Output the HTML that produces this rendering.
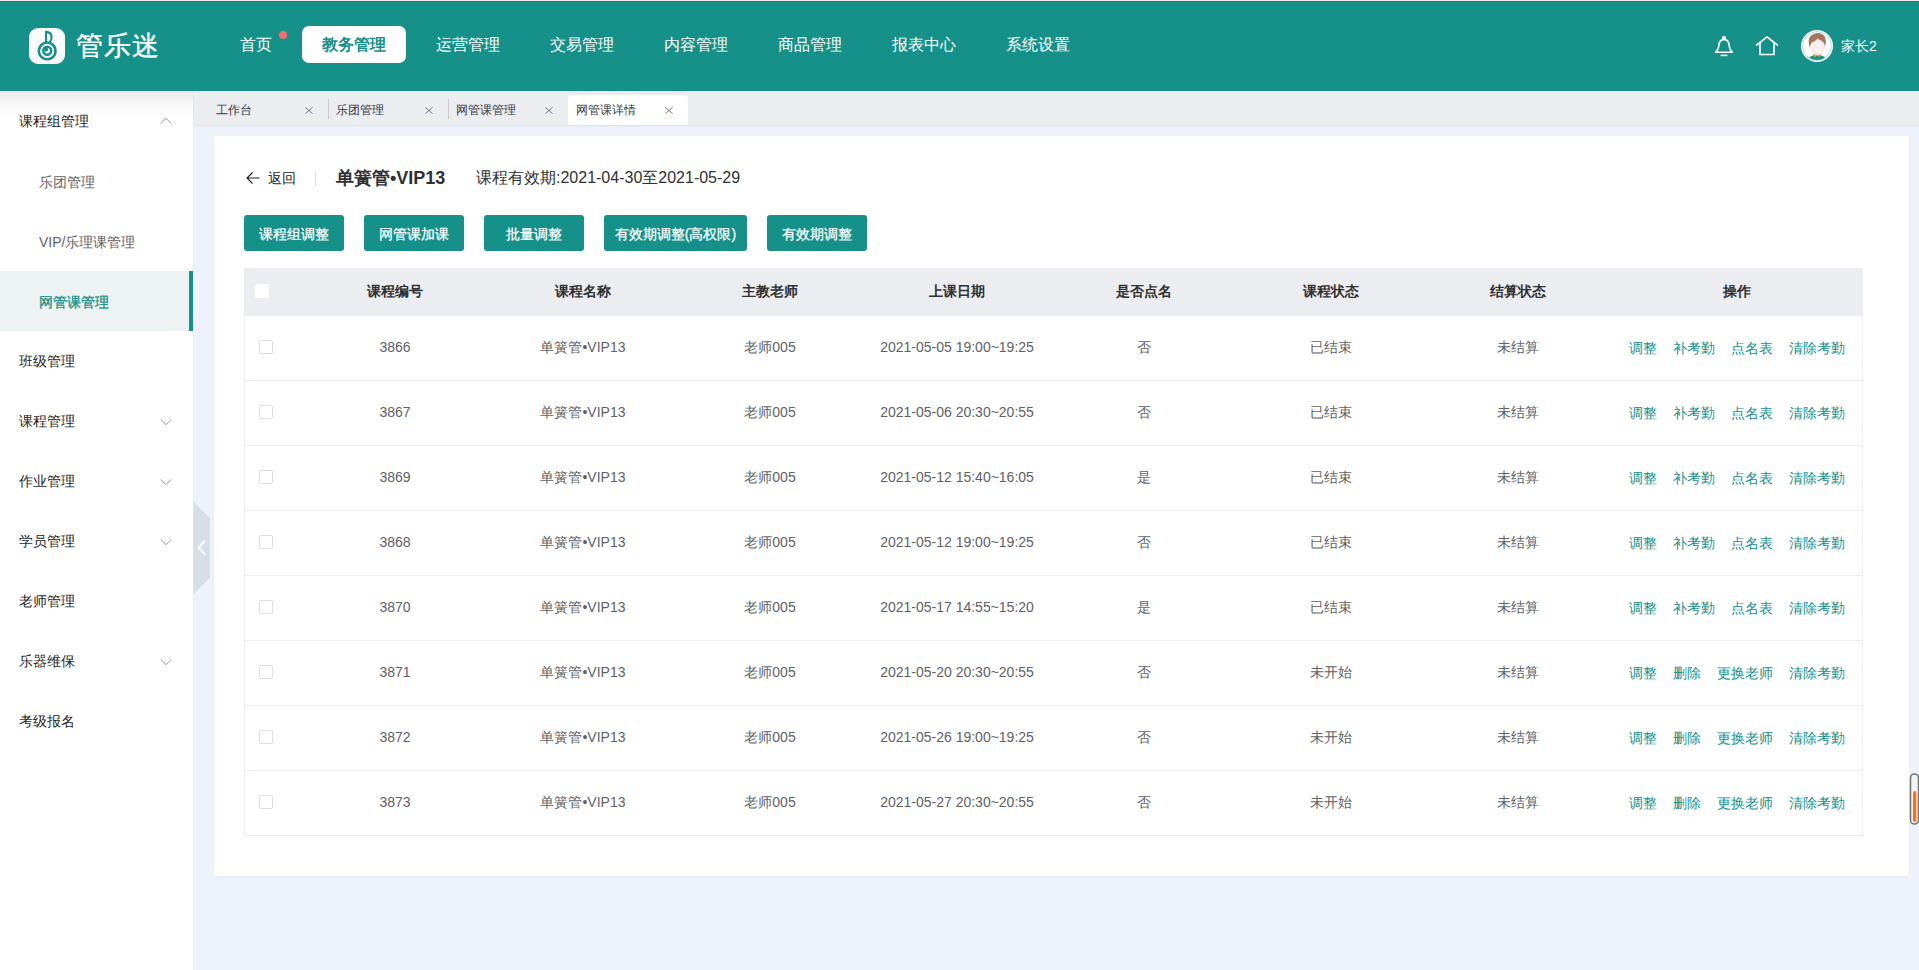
<!DOCTYPE html>
<html><head><meta charset="utf-8">
<style>
*{box-sizing:border-box;margin:0;padding:0}
html,body{width:1919px;height:970px;overflow:hidden;background:#eef3fb;font-family:"Liberation Sans",sans-serif;}
.abs{position:absolute}
#topline{left:0;top:0;width:1919px;height:1px;background:#efe6ec}
#header{left:0;top:1px;width:1919px;height:90px;background:#16918a;border-top:1px solid #078a80}
.logo-box{left:29px;top:28px;width:36px;height:36px;background:#fff;border-radius:9px}
.logo-box svg{position:absolute;left:0;top:0}
.logo-txt{left:76px;top:28px;font-size:27px;color:#fff;letter-spacing:1px;line-height:36px;font-weight:400;-webkit-text-stroke:0.35px #fff}
.nav{top:26px;height:37px;line-height:37px;font-size:16px;color:#fff;text-align:center;border-radius:7px;white-space:nowrap}
.nav.on{background:#fff;color:#16918a;font-weight:bold}
.dot{left:279px;top:31px;width:8px;height:8px;border-radius:50%;background:#f56c6c}
.uname{left:1841px;top:36px;font-size:14px;line-height:20px;color:#fff;white-space:nowrap}
#side{left:0;top:91px;width:194px;height:879px;background:#fff;border-right:1px solid #ebebeb}
#sideshadow{left:0;top:91px;width:193px;height:26px;background:linear-gradient(rgba(0,0,0,.085),rgba(0,0,0,.025) 55%,rgba(0,0,0,0))}
.mi{left:0;width:193px;height:60px;line-height:60px;font-size:14px;color:#1f1f1f;padding-left:19px;white-space:nowrap}
.mi.sub{padding-left:39px;color:#606266;line-height:62px}
.mi.act{background:#edf3f3;color:#16918a;-webkit-text-stroke:0.3px #16918a;border-right:4px solid #16918a;width:193px}
.chev{left:160px}
#tabs{left:194px;top:91px;width:1725px;height:34px;background:#ebedf0;box-shadow:0 1px 2px rgba(0,0,0,.08)}
.tab{top:95px;width:120px;height:30px;font-size:12px;color:#333a45;line-height:30px;padding-left:8px;white-space:nowrap}
.tab.on{background:#fff;border-radius:4px 4px 0 0}
.tsep{top:99px;width:1px;height:20px;background:#c8c9cc}
#card{left:214px;top:136px;width:1695px;height:740px;background:#fff;box-shadow:0 1px 3px rgba(0,0,0,.04)}
.back{left:268px;top:168px;font-size:14px;line-height:20px;color:#1f2022}
.vsep{left:315px;top:171px;width:1px;height:15px;background:#dcdfe6}
.title{left:336px;top:166px;font-size:18px;line-height:24px;font-weight:bold;color:#303133;white-space:nowrap}
.period{left:476px;top:166px;font-size:16px;line-height:24px;color:#303133;white-space:nowrap}
.btn{top:215px;height:36px;line-height:38px;-webkit-text-stroke:0.25px #fff;background:#16918a;color:#fff;font-size:14px;text-align:center;border-radius:3px;white-space:nowrap}
#thead{left:244px;top:268px;width:1619px;height:48px;background:#ebedf0}
.th{top:268px;height:48px;line-height:48px;font-size:14px;font-weight:bold;color:#303133;text-align:center;white-space:nowrap}
.row{left:244px;width:1619px;height:65px;border-left:1px solid #ebeef5;border-right:1px solid #ebeef5;border-bottom:1px solid #ebeef5;background:#fff}
.td{height:64px;line-height:64px;font-size:14px;color:#606266;text-align:center;white-space:nowrap}
.cb{width:14px;height:14px;border:1px solid #dcdfe6;border-radius:2px;background:#fff}
.ops{font-size:14px;color:#16918a;white-space:nowrap}
.ops span{margin-right:16px}
.ops span:last-child{margin-right:0}

</style></head><body>
<div class="abs" id="topline"></div>
<div class="abs" id="header"></div>
<div class="abs logo-box"><svg width="36" height="36" viewBox="0 0 36 36"><g fill="none" stroke="#16918a">
<circle cx="18.2" cy="22.9" r="8.35" stroke-width="2.6"/><circle cx="18.2" cy="22.8" r="3.95" stroke-width="2.5"/>
<path d="M17 3.9 Q22.5 4.3 22.6 9.2 Q22.6 12.2 20.5 14.4" stroke-width="2.2"/></g>
<rect x="16" y="2.8" width="2.1" height="12.6" fill="#16918a"/>
<circle cx="17.1" cy="21.6" r="2.1" fill="#16918a"/>
</svg></div>
<div class="abs logo-txt">管乐迷</div>
<div class="abs nav" style="left:220px;width:72px">首页</div>
<div class="abs nav on" style="left:302px;width:104px">教务管理</div>
<div class="abs nav" style="left:416px;width:104px">运营管理</div>
<div class="abs nav" style="left:530px;width:104px">交易管理</div>
<div class="abs nav" style="left:644px;width:104px">内容管理</div>
<div class="abs nav" style="left:758px;width:104px">商品管理</div>
<div class="abs nav" style="left:872px;width:104px">报表中心</div>
<div class="abs nav" style="left:986px;width:104px">系统设置</div>
<div class="abs dot"></div>
<svg class="abs" style="left:1712px;top:34px" width="24" height="24" viewBox="0 0 24 24"><g fill="none" stroke="#fff" stroke-width="1.6" stroke-linejoin="round">
<path d="M3.6 18.3 Q6.3 16.2 6.8 11.8 Q7.2 5.6 12 5.4 Q16.8 5.6 17.2 11.8 Q17.7 16.2 20.4 18.3 Z"/>
<circle cx="12" cy="3.9" r="1.3"/><path d="M8.6 21.4 H15.4"/></g></svg>
<svg class="abs" style="left:1755px;top:34px" width="24" height="24" viewBox="0 0 24 24"><g fill="none" stroke="#fff" stroke-width="1.7" stroke-linejoin="round" stroke-linecap="round">
<path d="M1.7 11 L12 2.8 L22.3 11"/><path d="M5 9 V20.5 H19 V9"/></g></svg>
<svg class="abs" style="left:1801px;top:30px" width="32" height="32" viewBox="0 0 32 32">
<defs><clipPath id="avc"><circle cx="16" cy="16" r="14"/></clipPath></defs>
<circle cx="16" cy="16" r="16" fill="#fff"/><circle cx="16" cy="16" r="14.4" fill="none" stroke="#8fcfc9" stroke-width=".7"/>
<g clip-path="url(#avc)"><path d="M5 33 Q6.5 25.5 16 24.8 Q25.5 25.5 27 33Z" fill="#16918a"/>
<path d="M11.8 24.2 L14 27.6 L16 25.2 L18.2 27.6 L20.2 24.2Z" fill="#d9a521"/>
<ellipse cx="16.4" cy="16.3" rx="7.1" ry="8.8" fill="#fcefef" stroke="#e9cccc" stroke-width=".5"/>
<path d="M8.6 17.5 Q6.4 9.5 9.8 5.8 Q12.8 2.9 17 3 Q22.2 3.3 24.2 7.6 Q25.6 11.2 24.1 16.5 Q23.4 12.4 20.8 10.8 Q18.2 9.8 16.6 8.4 Q14.2 11.6 10.6 12.6 Q9.4 14.6 8.6 17.5Z" fill="#a9735f"/></g>
</svg>
<div class="abs uname">家长2</div>
<div class="abs" id="side"></div>
<div class="abs" id="sideshadow"></div>
<div class="abs mi" style="top:91px">课程组管理</div>
<svg class="abs chev" style="top:117px" width="12" height="8" viewBox="0 0 12 8"><path d="M0.7 6.6 L6 1.3 L11.3 6.6" fill="none" stroke="#909399" stroke-width="1"/></svg>
<div class="abs mi sub" style="top:151px">乐团管理</div>
<div class="abs mi sub" style="top:211px">VIP/乐理课管理</div>
<div class="abs mi sub act" style="top:271px">网管课管理</div>
<div class="abs mi" style="top:331px">班级管理</div>
<div class="abs mi" style="top:391px">课程管理</div>
<svg class="abs chev" style="top:418px" width="12" height="8" viewBox="0 0 12 8"><path d="M0.7 1.4 L6 6.7 L11.3 1.4" fill="none" stroke="#909399" stroke-width="1"/></svg>
<div class="abs mi" style="top:451px">作业管理</div>
<svg class="abs chev" style="top:478px" width="12" height="8" viewBox="0 0 12 8"><path d="M0.7 1.4 L6 6.7 L11.3 1.4" fill="none" stroke="#909399" stroke-width="1"/></svg>
<div class="abs mi" style="top:511px">学员管理</div>
<svg class="abs chev" style="top:538px" width="12" height="8" viewBox="0 0 12 8"><path d="M0.7 1.4 L6 6.7 L11.3 1.4" fill="none" stroke="#909399" stroke-width="1"/></svg>
<div class="abs mi" style="top:571px">老师管理</div>
<div class="abs mi" style="top:631px">乐器维保</div>
<svg class="abs chev" style="top:658px" width="12" height="8" viewBox="0 0 12 8"><path d="M0.7 1.4 L6 6.7 L11.3 1.4" fill="none" stroke="#909399" stroke-width="1"/></svg>
<div class="abs mi" style="top:691px">考级报名</div>
<svg class="abs" style="left:193px;top:502px" width="18" height="92" viewBox="0 0 18 92"><path d="M0.5 0 L17 16 V76 L0.5 92 Z" fill="#d6dee6"/>
<path d="M11.8 38.5 L5.6 45.5 L11.8 52.5" fill="none" stroke="#fff" stroke-width="2"/></svg>
<div class="abs" id="tabs"></div>
<div class="abs tab" style="left:208px">工作台</div>
<svg class="abs" style="left:305px;top:107px" width="8" height="7" viewBox="0 0 8 7"><path d="M0.3 0.2 L7.7 6.8 M7.7 0.2 L0.3 6.8" stroke="#6b7888" stroke-width="1"/></svg>
<div class="abs tsep" style="left:328px"></div>
<div class="abs tab" style="left:328px">乐团管理</div>
<svg class="abs" style="left:425px;top:107px" width="8" height="7" viewBox="0 0 8 7"><path d="M0.3 0.2 L7.7 6.8 M7.7 0.2 L0.3 6.8" stroke="#6b7888" stroke-width="1"/></svg>
<div class="abs tsep" style="left:448px"></div>
<div class="abs tab" style="left:448px">网管课管理</div>
<svg class="abs" style="left:545px;top:107px" width="8" height="7" viewBox="0 0 8 7"><path d="M0.3 0.2 L7.7 6.8 M7.7 0.2 L0.3 6.8" stroke="#6b7888" stroke-width="1"/></svg>
<div class="abs tab on" style="left:568px">网管课详情</div>
<svg class="abs" style="left:665px;top:107px" width="8" height="7" viewBox="0 0 8 7"><path d="M0.3 0.2 L7.7 6.8 M7.7 0.2 L0.3 6.8" stroke="#6b7888" stroke-width="1"/></svg>
<div class="abs" id="card"></div>
<svg class="abs" style="left:245px;top:171px" width="16" height="14" viewBox="0 0 16 14"><path d="M14.5 7 H2 M7.5 1.5 L2 7 L7.5 12.5" fill="none" stroke="#222" stroke-width="1.15"/></svg>
<div class="abs back">返回</div>
<div class="abs vsep"></div>
<div class="abs title">单簧管•VIP13</div>
<div class="abs period">课程有效期:2021-04-30至2021-05-29</div>
<div class="abs btn" style="left:244px;width:100px">课程组调整</div>
<div class="abs btn" style="left:364px;width:100px">网管课加课</div>
<div class="abs btn" style="left:484px;width:100px">批量调整</div>
<div class="abs btn" style="left:604px;width:143px">有效期调整(高权限)</div>
<div class="abs btn" style="left:767px;width:100px">有效期调整</div>
<div class="abs" id="thead"></div>
<div class="abs cb" style="left:255px;top:284px;border-color:#fff"></div>
<div class="abs th" style="left:295px;width:200px;top:267px">课程编号</div>
<div class="abs th" style="left:483px;width:200px;top:267px">课程名称</div>
<div class="abs th" style="left:670px;width:200px;top:267px">主教老师</div>
<div class="abs th" style="left:857px;width:200px;top:267px">上课日期</div>
<div class="abs th" style="left:1044px;width:200px;top:267px">是否点名</div>
<div class="abs th" style="left:1231px;width:200px;top:267px">课程状态</div>
<div class="abs th" style="left:1418px;width:200px;top:267px">结算状态</div>
<div class="abs th" style="left:1637px;width:200px;top:267px">操作</div>
<div class="abs row" style="top:316px"></div>
<div class="abs cb" style="left:259px;top:340px"></div>
<div class="abs td" style="left:295px;width:200px;top:315px">3866</div>
<div class="abs td" style="left:483px;width:200px;top:315px">单簧管•VIP13</div>
<div class="abs td" style="left:670px;width:200px;top:315px">老师005</div>
<div class="abs td" style="left:857px;width:200px;top:315px">2021-05-05 19:00~19:25</div>
<div class="abs td" style="left:1044px;width:200px;top:315px">否</div>
<div class="abs td" style="left:1231px;width:200px;top:315px">已结束</div>
<div class="abs td" style="left:1418px;width:200px;top:315px">未结算</div>
<div class="abs ops" style="left:1629px;top:316px;line-height:64px"><span>调整</span><span>补考勤</span><span>点名表</span><span>清除考勤</span></div>
<div class="abs row" style="top:381px"></div>
<div class="abs cb" style="left:259px;top:405px"></div>
<div class="abs td" style="left:295px;width:200px;top:380px">3867</div>
<div class="abs td" style="left:483px;width:200px;top:380px">单簧管•VIP13</div>
<div class="abs td" style="left:670px;width:200px;top:380px">老师005</div>
<div class="abs td" style="left:857px;width:200px;top:380px">2021-05-06 20:30~20:55</div>
<div class="abs td" style="left:1044px;width:200px;top:380px">否</div>
<div class="abs td" style="left:1231px;width:200px;top:380px">已结束</div>
<div class="abs td" style="left:1418px;width:200px;top:380px">未结算</div>
<div class="abs ops" style="left:1629px;top:381px;line-height:64px"><span>调整</span><span>补考勤</span><span>点名表</span><span>清除考勤</span></div>
<div class="abs row" style="top:446px"></div>
<div class="abs cb" style="left:259px;top:470px"></div>
<div class="abs td" style="left:295px;width:200px;top:445px">3869</div>
<div class="abs td" style="left:483px;width:200px;top:445px">单簧管•VIP13</div>
<div class="abs td" style="left:670px;width:200px;top:445px">老师005</div>
<div class="abs td" style="left:857px;width:200px;top:445px">2021-05-12 15:40~16:05</div>
<div class="abs td" style="left:1044px;width:200px;top:445px">是</div>
<div class="abs td" style="left:1231px;width:200px;top:445px">已结束</div>
<div class="abs td" style="left:1418px;width:200px;top:445px">未结算</div>
<div class="abs ops" style="left:1629px;top:446px;line-height:64px"><span>调整</span><span>补考勤</span><span>点名表</span><span>清除考勤</span></div>
<div class="abs row" style="top:511px"></div>
<div class="abs cb" style="left:259px;top:535px"></div>
<div class="abs td" style="left:295px;width:200px;top:510px">3868</div>
<div class="abs td" style="left:483px;width:200px;top:510px">单簧管•VIP13</div>
<div class="abs td" style="left:670px;width:200px;top:510px">老师005</div>
<div class="abs td" style="left:857px;width:200px;top:510px">2021-05-12 19:00~19:25</div>
<div class="abs td" style="left:1044px;width:200px;top:510px">否</div>
<div class="abs td" style="left:1231px;width:200px;top:510px">已结束</div>
<div class="abs td" style="left:1418px;width:200px;top:510px">未结算</div>
<div class="abs ops" style="left:1629px;top:511px;line-height:64px"><span>调整</span><span>补考勤</span><span>点名表</span><span>清除考勤</span></div>
<div class="abs row" style="top:576px"></div>
<div class="abs cb" style="left:259px;top:600px"></div>
<div class="abs td" style="left:295px;width:200px;top:575px">3870</div>
<div class="abs td" style="left:483px;width:200px;top:575px">单簧管•VIP13</div>
<div class="abs td" style="left:670px;width:200px;top:575px">老师005</div>
<div class="abs td" style="left:857px;width:200px;top:575px">2021-05-17 14:55~15:20</div>
<div class="abs td" style="left:1044px;width:200px;top:575px">是</div>
<div class="abs td" style="left:1231px;width:200px;top:575px">已结束</div>
<div class="abs td" style="left:1418px;width:200px;top:575px">未结算</div>
<div class="abs ops" style="left:1629px;top:576px;line-height:64px"><span>调整</span><span>补考勤</span><span>点名表</span><span>清除考勤</span></div>
<div class="abs row" style="top:641px"></div>
<div class="abs cb" style="left:259px;top:665px"></div>
<div class="abs td" style="left:295px;width:200px;top:640px">3871</div>
<div class="abs td" style="left:483px;width:200px;top:640px">单簧管•VIP13</div>
<div class="abs td" style="left:670px;width:200px;top:640px">老师005</div>
<div class="abs td" style="left:857px;width:200px;top:640px">2021-05-20 20:30~20:55</div>
<div class="abs td" style="left:1044px;width:200px;top:640px">否</div>
<div class="abs td" style="left:1231px;width:200px;top:640px">未开始</div>
<div class="abs td" style="left:1418px;width:200px;top:640px">未结算</div>
<div class="abs ops" style="left:1629px;top:641px;line-height:64px"><span>调整</span><span>删除</span><span>更换老师</span><span>清除考勤</span></div>
<div class="abs row" style="top:706px"></div>
<div class="abs cb" style="left:259px;top:730px"></div>
<div class="abs td" style="left:295px;width:200px;top:705px">3872</div>
<div class="abs td" style="left:483px;width:200px;top:705px">单簧管•VIP13</div>
<div class="abs td" style="left:670px;width:200px;top:705px">老师005</div>
<div class="abs td" style="left:857px;width:200px;top:705px">2021-05-26 19:00~19:25</div>
<div class="abs td" style="left:1044px;width:200px;top:705px">否</div>
<div class="abs td" style="left:1231px;width:200px;top:705px">未开始</div>
<div class="abs td" style="left:1418px;width:200px;top:705px">未结算</div>
<div class="abs ops" style="left:1629px;top:706px;line-height:64px"><span>调整</span><span>删除</span><span>更换老师</span><span>清除考勤</span></div>
<div class="abs row" style="top:771px"></div>
<div class="abs cb" style="left:259px;top:795px"></div>
<div class="abs td" style="left:295px;width:200px;top:770px">3873</div>
<div class="abs td" style="left:483px;width:200px;top:770px">单簧管•VIP13</div>
<div class="abs td" style="left:670px;width:200px;top:770px">老师005</div>
<div class="abs td" style="left:857px;width:200px;top:770px">2021-05-27 20:30~20:55</div>
<div class="abs td" style="left:1044px;width:200px;top:770px">否</div>
<div class="abs td" style="left:1231px;width:200px;top:770px">未开始</div>
<div class="abs td" style="left:1418px;width:200px;top:770px">未结算</div>
<div class="abs ops" style="left:1629px;top:771px;line-height:64px"><span>调整</span><span>删除</span><span>更换老师</span><span>清除考勤</span></div>
<svg class="abs" style="left:1909px;top:773px" width="10" height="52" viewBox="0 0 10 52"><rect x="1.5" y="1" width="8" height="50" rx="4" fill="#f4f6f9" stroke="#777" stroke-width="1.6"/>
<rect x="4" y="18" width="3.4" height="31" rx="1.7" fill="#f97316"/></svg>
</body></html>
